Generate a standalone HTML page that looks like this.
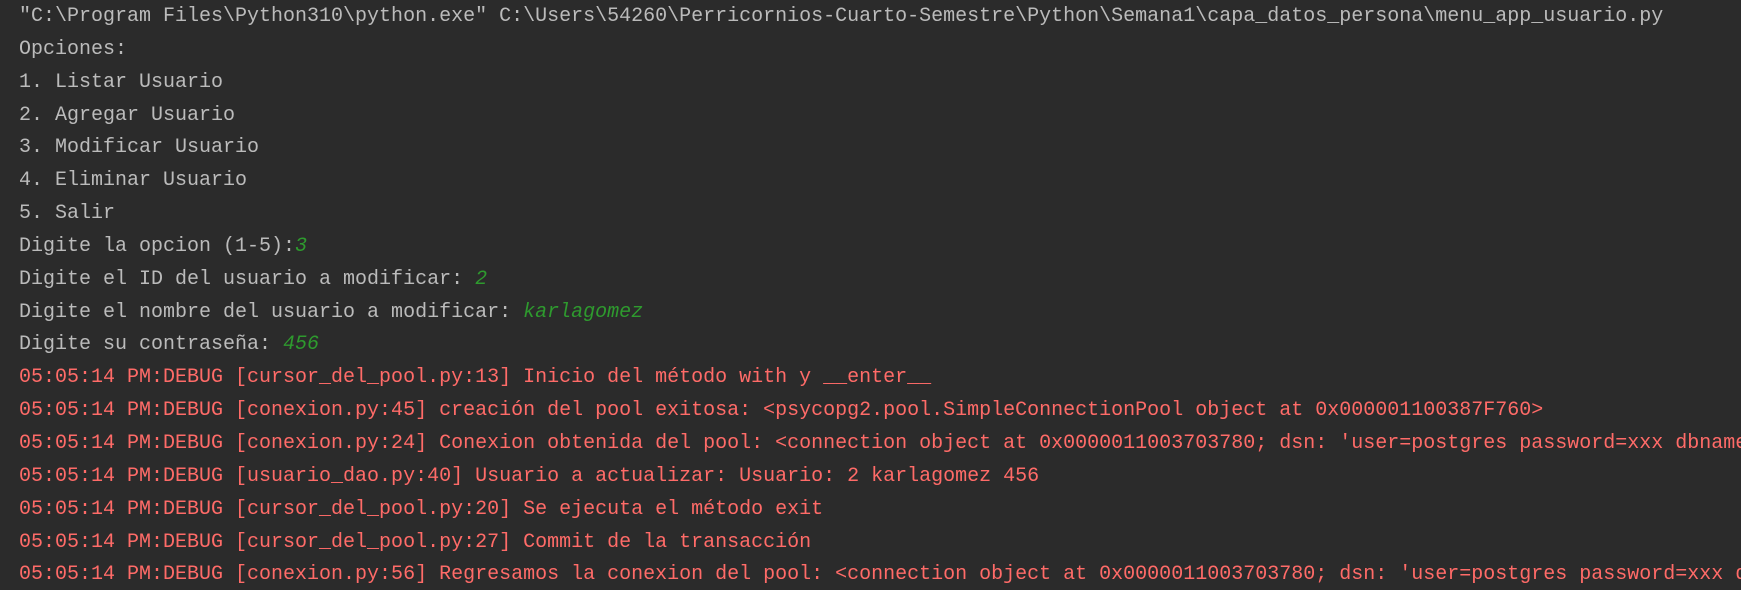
<!DOCTYPE html>
<html><head><meta charset="utf-8"><style>
html,body{margin:0;padding:0;background:#2b2b2b;width:1741px;height:590px;overflow:hidden}
pre{margin:0;padding:0 0 0 19px;font-family:"Liberation Mono",monospace;font-size:20px;line-height:32.85px;color:#bbbbbb;white-space:pre;position:relative;top:1px}
.g{color:#2e9a2e;font-style:italic}
.r{color:#ff6b68}
</style></head><body><pre>"C:\Program Files\Python310\python.exe" C:\Users\54260\Perricornios-Cuarto-Semestre\Python\Semana1\capa_datos_persona\menu_app_usuario.py
Opciones:
1. Listar Usuario
2. Agregar Usuario
3. Modificar Usuario
4. Eliminar Usuario
5. Salir
Digite la opcion (1-5):<span class="g">3</span>
Digite el ID del usuario a modificar: <span class="g">2</span>
Digite el nombre del usuario a modificar: <span class="g">karlagomez</span>
Digite su contraseña: <span class="g">456</span>
<span class="r">05:05:14 PM:DEBUG [cursor_del_pool.py:13] Inicio del método with y __enter__
05:05:14 PM:DEBUG [conexion.py:45] creación del pool exitosa: &lt;psycopg2.pool.SimpleConnectionPool object at 0x000001100387F760&gt;
05:05:14 PM:DEBUG [conexion.py:24] Conexion obtenida del pool: &lt;connection object at 0x0000011003703780; dsn: 'user=postgres password=xxx dbname=
05:05:14 PM:DEBUG [usuario_dao.py:40] Usuario a actualizar: Usuario: 2 karlagomez 456
05:05:14 PM:DEBUG [cursor_del_pool.py:20] Se ejecuta el método exit
05:05:14 PM:DEBUG [cursor_del_pool.py:27] Commit de la transacción
05:05:14 PM:DEBUG [conexion.py:56] Regresamos la conexion del pool: &lt;connection object at 0x0000011003703780; dsn: 'user=postgres password=xxx db</span></pre></body></html>
